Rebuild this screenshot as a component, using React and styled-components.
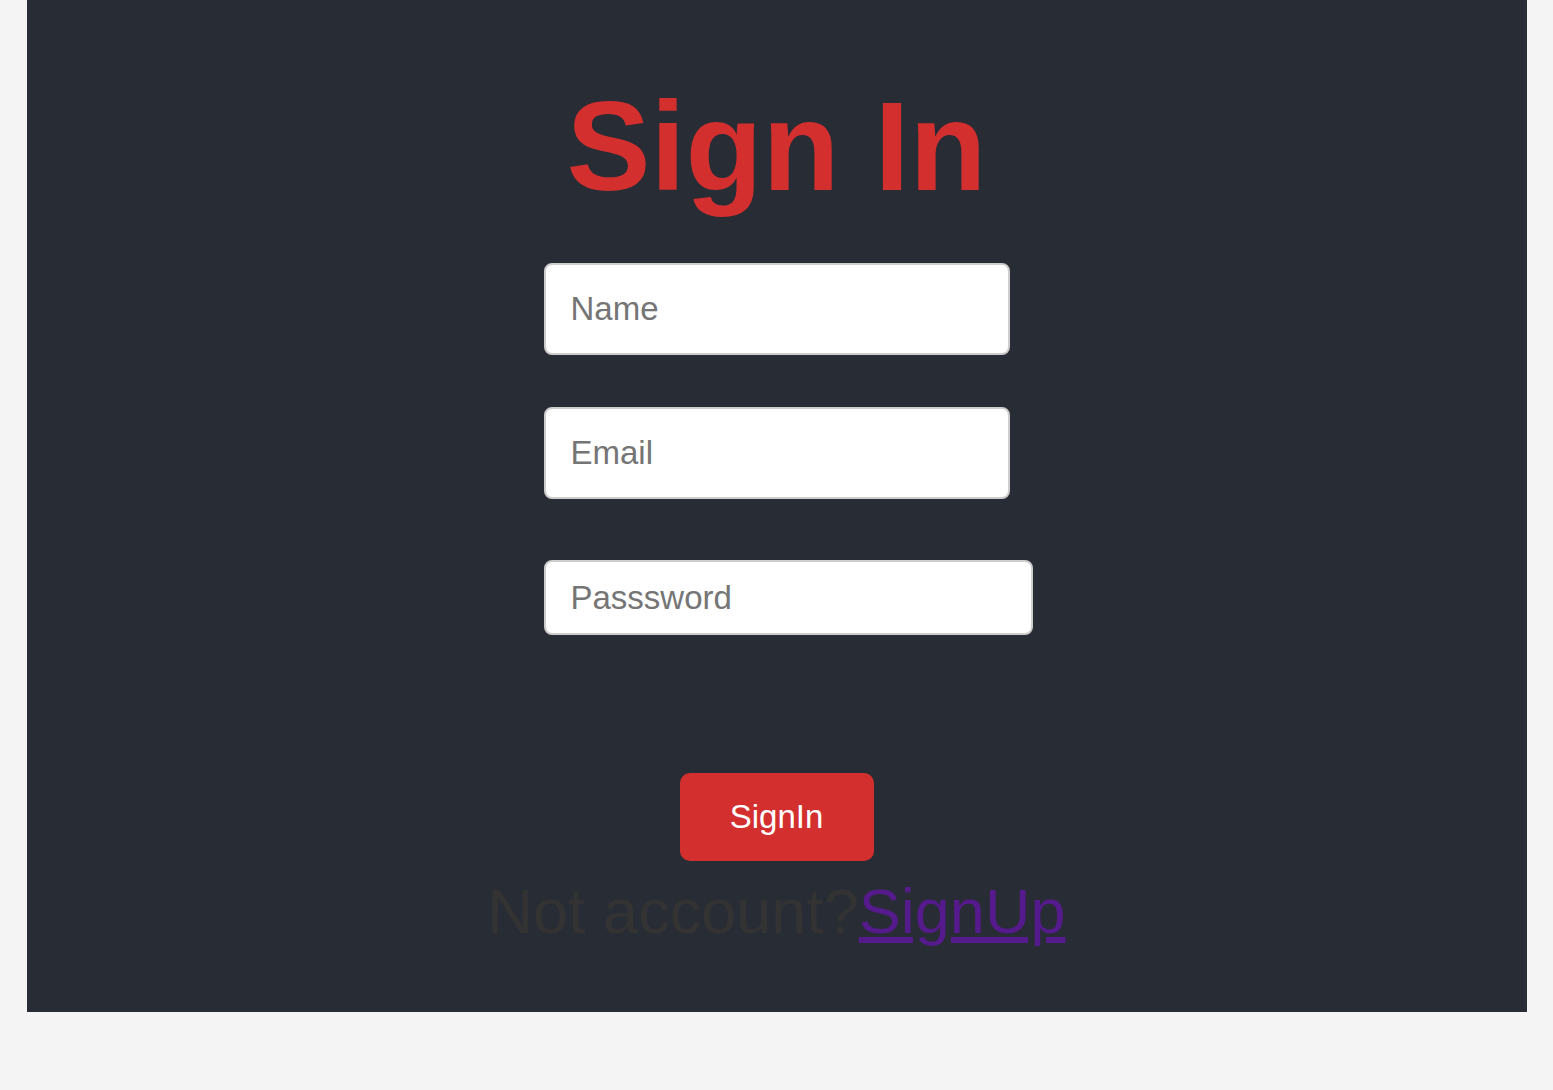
import React from 'react';
import styled, { createGlobalStyle } from 'styled-components';

const GlobalStyle = createGlobalStyle`
	html, body {
		margin: 0;
		padding: 0;
		background: #f4f4f4;
		font-family: "Liberation Sans", Arial, sans-serif;
	}
`;

const Page = styled.div`
	min-height: 1090px;
	background: #f4f4f4;
`;

const Panel = styled.div`
	width: 1500px;
	margin: 0 auto;
	background: #282c34;
	display: flex;
	flex-direction: column;
	align-items: center;
	padding: 74px 0 65px;
	box-sizing: border-box;
`;

const Title = styled.h1`
	margin: 0;
	font-size: 126px;
	font-weight: 700;
	line-height: normal;
	color: #d32f2f;
`;

const Form = styled.form`
	width: 466px;
	margin-top: 44px;
	display: flex;
	flex-direction: column;
	align-items: flex-start;
`;

const Input = styled.input`
	box-sizing: border-box;
	width: ${(props) => props.w || 466}px;
	height: ${(props) => props.h || 92}px;
	margin-bottom: ${(props) => props.gap || 0}px;
	padding: 0 25px;
	border: 2px solid #cdcdcd;
	border-radius: 8px;
	background: #fff;
	font-family: "Liberation Sans", Arial, sans-serif;
	font-size: 33px;
	color: #333;
	outline: none;

	&::placeholder {
		color: #757575;
	}
`;

const Button = styled.button`
	margin-top: 138px;
	width: 194px;
	height: 88px;
	border: none;
	border-radius: 10px;
	background: #d32f2f;
	color: #fff;
	font-family: "Liberation Sans", Arial, sans-serif;
	font-size: 33px;
	cursor: pointer;
`;

const Footer = styled.p`
	margin: 14px 0 0;
	font-size: 63px;
	line-height: normal;
	color: #333;
	white-space: nowrap;
`;

const Link = styled.a`
	color: #551a8b;
	text-decoration: underline;
`;

const App = () => (
	<Page>
		<GlobalStyle />
		<Panel>
			<Title>Sign In</Title>
			<Form onSubmit={(e) => e.preventDefault()}>
				<Input type="text" placeholder="Name" gap={52} />
				<Input type="email" placeholder="Email" gap={61} />
				<Input type="password" placeholder="Passsword" w={489} h={75} />
			</Form>
			<Button type="button">SignIn</Button>
			<Footer>
				Not account?<Link href="#signup">SignUp</Link>
			</Footer>
		</Panel>
	</Page>
);

export default App;
